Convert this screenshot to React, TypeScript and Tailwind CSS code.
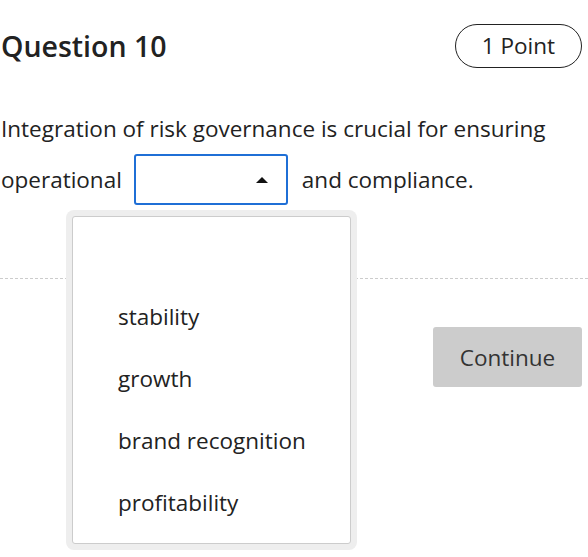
import { FC } from "react";

const options = ["", "stability", "growth", "brand recognition", "profitability"];

const App: FC = () => {
  return (
    <div
      className="relative w-[588px] h-[557px] bg-white text-[#222] pl-[1px] pr-[6px] overflow-hidden"
      style={{ fontFamily: '"Open Sans", sans-serif' }}
    >
      <div className="flex items-center justify-between pt-[24px]">
        <h1 className="text-[28.5px] font-semibold leading-[44px]">Question 10</h1>
        <div className="h-[44px] px-[26px] flex items-center rounded-full border border-[#222] text-[22.5px]">
          1 Point
        </div>
      </div>

      <p className="mt-[35px] text-[22.5px] leading-[51px]">
        Integration of risk governance is crucial for ensuring
        <br />
        operational
        <span className="inline-flex align-middle ml-[12px] mr-[14px] -mt-[4px] w-[154px] h-[51px] border-2 border-[#1f6fd6] rounded-[3px] items-center justify-end pr-[18px]">
          <span className="w-0 h-0 border-l-[6px] border-r-[6px] border-b-[6px] border-l-transparent border-r-transparent border-b-[#111]" />
        </span>
        and compliance.
      </p>

      <div className="mt-[73px] -ml-[1px] -mr-[6px] border-t border-dashed border-[#ccc]" />

      <div className="flex justify-end mt-[48px]">
        <button className="w-[149px] h-[60px] rounded-[3px] bg-[#ccc] text-[22.5px] text-[#333]">
          Continue
        </button>
      </div>

      <div className="absolute left-[66px] top-[210px] w-[291px] h-[340px] bg-[#eee] rounded-[8px] p-[6px]">
        <div className="h-full bg-white border border-[#ccc] rounded-[3px] py-[7px]">
          {options.map((o, i) => (
            <div key={i} className="h-[62px] flex items-center pl-[45px] text-[22.5px] text-[#222]">
              {o}
            </div>
          ))}
        </div>
      </div>
    </div>
  );
};

export default App;
